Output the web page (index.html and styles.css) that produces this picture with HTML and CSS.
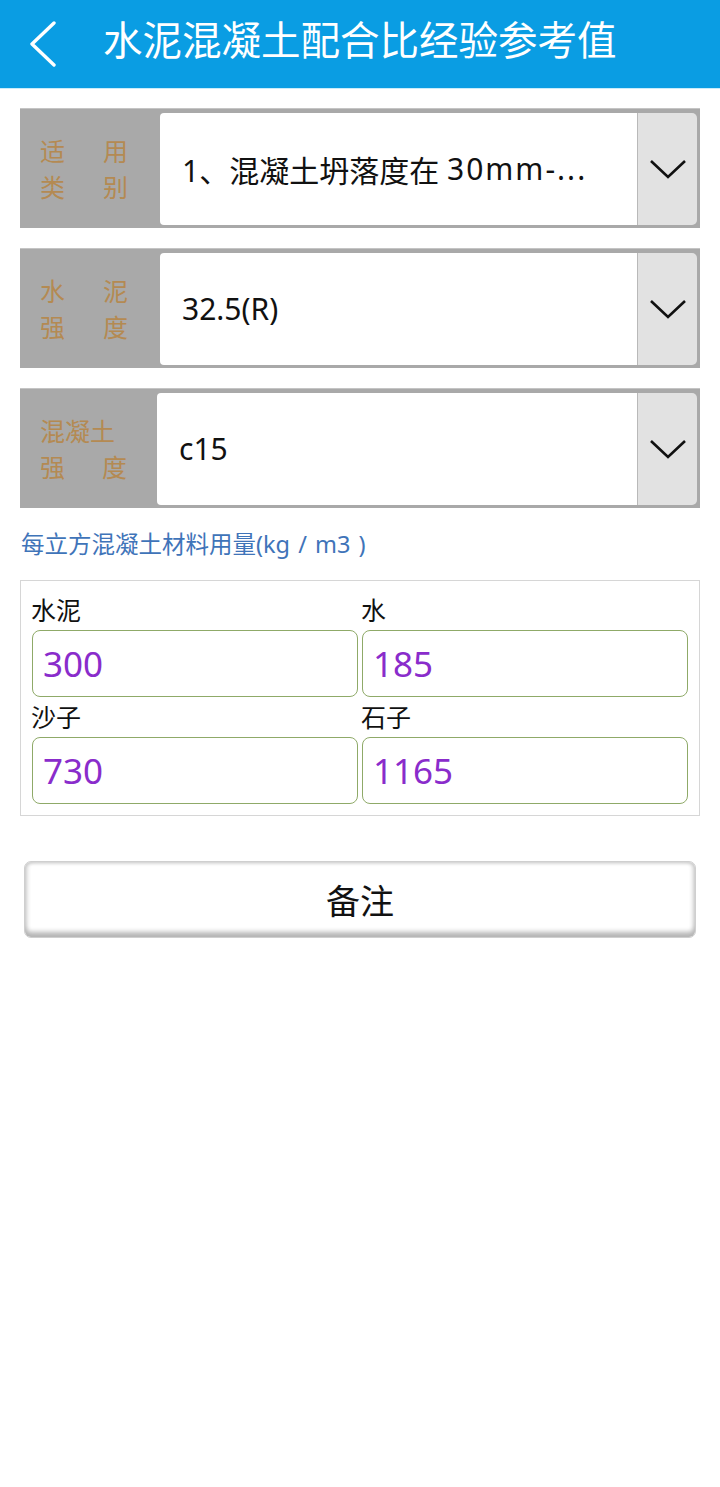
FILE: index.html
```html
<!DOCTYPE html>
<html lang="zh-CN">
<head>
    <meta charset="UTF-8">
    <meta name="viewport" content="width=device-width, initial-scale=1.0">
    <title>水泥混凝土配合比经验参考值</title>
    <link rel="stylesheet" href="styles.css">
</head>
<body>
    <div class="header">
        <svg class="back" width="32" height="48" viewBox="0 0 32 48">
            <polyline points="26,4 4,25 26,46" fill="none" stroke="#fff" stroke-width="3.4" stroke-linecap="round" stroke-linejoin="round"/>
        </svg>
        <h1 class="title">水泥混凝土配合比经验参考值</h1>
    </div>

    <div class="container">

        <div class="select-row">
            <div class="select-label">
                <p><span>适</span><span>用</span></p>
                <p><span>类</span><span>别</span></p>
            </div>
            <div class="select-field">1、混凝土坍落度在 <span class="latin">30mm-...</span></div>
            <div class="select-btn">
                <svg width="40" height="24" viewBox="0 0 40 24"><polyline points="3,4 20,20 37,4" fill="none" stroke="#111" stroke-width="2.6"/></svg>
            </div>
        </div>

        <div class="select-row">
            <div class="select-label">
                <p><span>水</span><span>泥</span></p>
                <p><span>强</span><span>度</span></p>
            </div>
            <div class="select-field">32.5(R)</div>
            <div class="select-btn">
                <svg width="40" height="24" viewBox="0 0 40 24"><polyline points="3,4 20,20 37,4" fill="none" stroke="#111" stroke-width="2.6"/></svg>
            </div>
        </div>

        <div class="select-row">
            <div class="select-label narrow">
                <p>混凝土</p>
                <p><span>强</span><span>度</span></p>
            </div>
            <div class="select-field">c15</div>
            <div class="select-btn">
                <svg width="40" height="24" viewBox="0 0 40 24"><polyline points="3,4 20,20 37,4" fill="none" stroke="#111" stroke-width="2.6"/></svg>
            </div>
        </div>

        <p class="caption">每立方混凝土材料用量(kg / m3 )</p>

        <div class="result-box">
            <div class="cell">
                <p class="cell-label">水泥</p>
                <div class="cell-value">300</div>
            </div>
            <div class="cell">
                <p class="cell-label">水</p>
                <div class="cell-value">185</div>
            </div>
            <div class="cell">
                <p class="cell-label">沙子</p>
                <div class="cell-value">730</div>
            </div>
            <div class="cell">
                <p class="cell-label">石子</p>
                <div class="cell-value">1165</div>
            </div>
        </div>

        <button type="button" class="note-btn">备注</button>
    </div>
</body>
</html>
```

FILE: styles.css
```css
* {
    margin: 0;
    padding: 0;
    box-sizing: border-box;
    font-family: "Noto Sans", "Noto Sans CJK SC", sans-serif;
}

body {
    background: #fff;
    width: 720px;
    min-height: 1487px;
}

.header {
    height: 89px;
    background: #0a9de3;
    border-bottom: 1px solid #c8ecfb;
    display: flex;
    align-items: center;
    padding-left: 28px;
}

.back {
    margin-right: 43px;
    margin-top: -2px;
}

.title {
    color: #fff;
    font-size: 39.5px;
    font-weight: normal;
    line-height: 1;
    margin-top: -6px;
}

.container {
    padding: 19px 20px 0 20px;
}

.select-row {
    height: 120px;
    background: #a9a9a9;
    border-top: 1px solid #c4c4c4;
    display: flex;
    align-items: center;
    padding-right: 3px;
    margin-bottom: 20px;
}

.select-label {
    width: 140px;
    padding: 0 32px 0 20px;
    color: #b48a52;
    font-size: 25px;
    line-height: 36px;
}

.select-label.narrow {
    width: 137px;
    padding-right: 30px;
}

.select-label p {
    display: flex;
    justify-content: space-between;
}

.select-field {
    flex: 1;
    height: 112px;
    background: #fff;
    border-radius: 4px 0 0 4px;
    display: flex;
    align-items: center;
    padding-left: 22px;
    font-size: 30px;
    color: #111;
    white-space: pre;
}

.latin {
    letter-spacing: 2px;
}

.select-btn {
    width: 60px;
    height: 112px;
    background: #e2e2e2;
    border-left: 1px solid #b9b9b9;
    border-radius: 0 5px 5px 0;
    display: flex;
    align-items: center;
    justify-content: center;
}

.caption {
    color: #3f74b9;
    font-size: 23.5px;
    line-height: 32px;
    margin: 7px 0 0 1px;
    word-spacing: 2px;
}

.result-box {
    margin-top: 20px;
    border: 1px solid #d6d6d6;
    padding: 9px 11px 11px 11px;
    display: grid;
    grid-template-columns: 1fr 1fr;
    column-gap: 4px;
}

.cell-label {
    font-size: 25px;
    line-height: 40px;
    color: #111;
    margin-left: -1px;
}

.cell-value {
    height: 67px;
    border: 1px solid #8faa68;
    border-radius: 8px;
    display: flex;
    align-items: center;
    padding-left: 10px;
    font-size: 35px;
    color: #8a2ccb;
}

.note-btn {
    display: block;
    margin: 45px 4px 0 4px;
    width: 672px;
    height: 77px;
    background: #fff;
    border: 1px solid #cfcfcf;
    border-radius: 7px;
    box-shadow: inset 0 -8px 5px -3px #b5b5b5, inset 5px 0 4px -3px #c9c9c9, inset -5px 0 4px -3px #c9c9c9, inset 0 4px 3px -2px #d8d8d8;
    font-size: 34px;
    color: #111;
    cursor: pointer;
}
```
